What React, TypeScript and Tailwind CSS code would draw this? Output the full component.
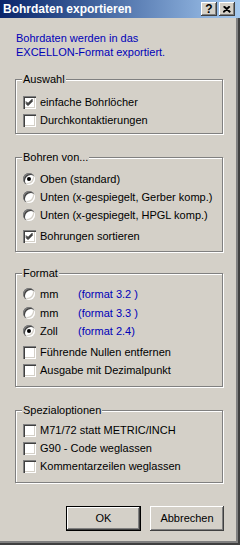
import React from "react";

const face = "bg-[#d4d0c8]";

function CheckBox({ checked }: { checked?: boolean }) {
  return (
    <div className="relative w-[13px] h-[13px] shrink-0 bg-white shadow-[inset_1px_1px_0_#808080,inset_2px_2px_0_#404040,inset_-1px_-1px_0_#ffffff,inset_-2px_-2px_0_#d4d0c8]">
      {checked && (
        <svg className="absolute left-0 top-0" width="13" height="13" viewBox="0 0 13 13">
          <path d="M3 5.5 L5 7.5 L9.5 3 M3 6.5 L5 8.5 L9.5 4 M3 7.5 L5 9.5 L9.5 5" stroke="#000" strokeWidth="1" fill="none" />
        </svg>
      )}
    </div>
  );
}

function Radio({ checked }: { checked?: boolean }) {
  return (
    <div className="relative w-[12px] h-[12px] shrink-0 rounded-full bg-white shadow-[inset_1px_1px_0_#808080,inset_2px_2px_0_#404040,inset_-1px_-1px_0_#ffffff,inset_-2px_-2px_0_#d4d0c8] flex items-center justify-center">
      {checked && <div className="w-[4px] h-[4px] rounded-full bg-black" />}
    </div>
  );
}

function Row({ children, control, className = "" }: { children: React.ReactNode; control: React.ReactNode; className?: string }) {
  return (
    <div className={`flex items-center h-[18px] pl-[7px] ${className}`}>
      <div className="w-[13px] flex items-center">{control}</div>
      <div className="ml-[4px] whitespace-nowrap">{children}</div>
    </div>
  );
}

function Group({ label, className, children }: { label: string; className: string; children: React.ReactNode }) {
  return (
    <div className={`relative mx-[15px] w-[208px] border border-[#808080] shadow-[inset_1px_1px_0_#ffffff,1px_1px_0_#ffffff] ${className}`}>
      <span className={`absolute -top-[8px] left-[6px] px-[1px] leading-[14px] ${face}`}>{label}</span>
      {children}
    </div>
  );
}

const blue = "text-[#0000b8]";

export default function App() {
  return (
    <div
      className={`relative w-[240px] h-[545px] ${face} text-[11px] text-black overflow-hidden`}
      style={{ fontFamily: '"Liberation Sans", Arial, sans-serif' }}
    >
      {/* Title bar */}
      <div className="flex items-center h-[18px] pl-[3px] pr-[5px] bg-gradient-to-r from-[#0a246a] to-[#a6caf0]">
        <span className="flex-1 text-white font-bold text-[12px] leading-[18px]">Bohrdaten exportieren</span>
        <div className="flex gap-[2px]">
          <div className="w-[16px] h-[14px] bg-[#d4d0c8] shadow-[inset_-1px_-1px_0_#404040,inset_1px_1px_0_#ffffff,inset_-2px_-2px_0_#808080] flex items-center justify-center font-bold text-[12px] leading-none">
            ?
          </div>
          <div className="w-[16px] h-[14px] bg-[#d4d0c8] shadow-[inset_-1px_-1px_0_#404040,inset_1px_1px_0_#ffffff,inset_-2px_-2px_0_#808080] flex items-center justify-center">
            <svg width="8" height="7" viewBox="0 0 8 7">
              <path d="M0.5 0.5 L7 6.5 M1.5 0.5 L7.5 6 M7 0.5 L0.5 6.5 M6 0.5 L0 6" stroke="#000" strokeWidth="1.2" fill="none" />
            </svg>
          </div>
        </div>
      </div>

      {/* Body with right/bottom frame */}
      <div className="flex flex-col h-[527px] shadow-[inset_-2px_-2px_0_#404040,inset_-4px_-4px_0_#808080]">
        <div className={`mt-[13px] ml-[16px] leading-[14px] ${blue}`}>
          <div>Bohrdaten werden in das</div>
          <div>EXCELLON-Format exportiert.</div>
        </div>

        <Group label="Auswahl" className="mt-[20px] h-[55px] pt-[13px]">
          <Row control={<CheckBox checked />}>einfache Bohrlöcher</Row>
          <Row control={<CheckBox />}>Durchkontaktierungen</Row>
        </Group>

        <Group label="Bohren von..." className="mt-[23px] h-[95px] pt-[12px]">
          <Row control={<Radio checked />}>Oben (standard)</Row>
          <Row control={<Radio />}>Unten (x-gespiegelt, Gerber komp.)</Row>
          <Row control={<Radio />}>Unten (x-gespiegelt, HPGL komp.)</Row>
          <Row control={<CheckBox checked />} className="mt-[3px]">
            Bohrungen sortieren
          </Row>
        </Group>

        <Group label="Format" className="mt-[21px] h-[114px] pt-[11px]">
          <Row control={<Radio />}>
            <span className="inline-block w-[38px]">mm</span>
            <span className={blue}>(format 3.2 )</span>
          </Row>
          <Row control={<Radio />} className="mt-[1px]">
            <span className="inline-block w-[38px]">mm</span>
            <span className={blue}>(format 3.3 )</span>
          </Row>
          <Row control={<Radio checked />}>
            <span className="inline-block w-[38px]">Zoll</span>
            <span className={blue}>(format 2.4)</span>
          </Row>
          <Row control={<CheckBox />} className="mt-[3px]">
            Führende Nullen entfernen
          </Row>
          <Row control={<CheckBox />}>Ausgabe mit Dezimalpunkt</Row>
        </Group>

        <Group label="Spezialoptionen" className="mt-[23px] h-[73px] pt-[10px]">
          <Row control={<CheckBox />}>M71/72 statt METRIC/INCH</Row>
          <Row control={<CheckBox />}>G90 - Code weglassen</Row>
          <Row control={<CheckBox />}>Kommentarzeilen weglassen</Row>
        </Group>

        <div className="flex mt-[23px] ml-[66px] gap-[9px]">
          <button className="w-[75px] h-[25px] border border-black bg-[#d4d0c8] shadow-[inset_-1px_-1px_0_#404040,inset_1px_1px_0_#ffffff,inset_-2px_-2px_0_#808080] text-[11px]">
            OK
          </button>
          <button className="w-[74px] h-[25px] bg-[#d4d0c8] shadow-[inset_-1px_-1px_0_#404040,inset_1px_1px_0_#ffffff,inset_-2px_-2px_0_#808080] text-[11px]">
            Abbrechen
          </button>
        </div>
      </div>
    </div>
  );
}
